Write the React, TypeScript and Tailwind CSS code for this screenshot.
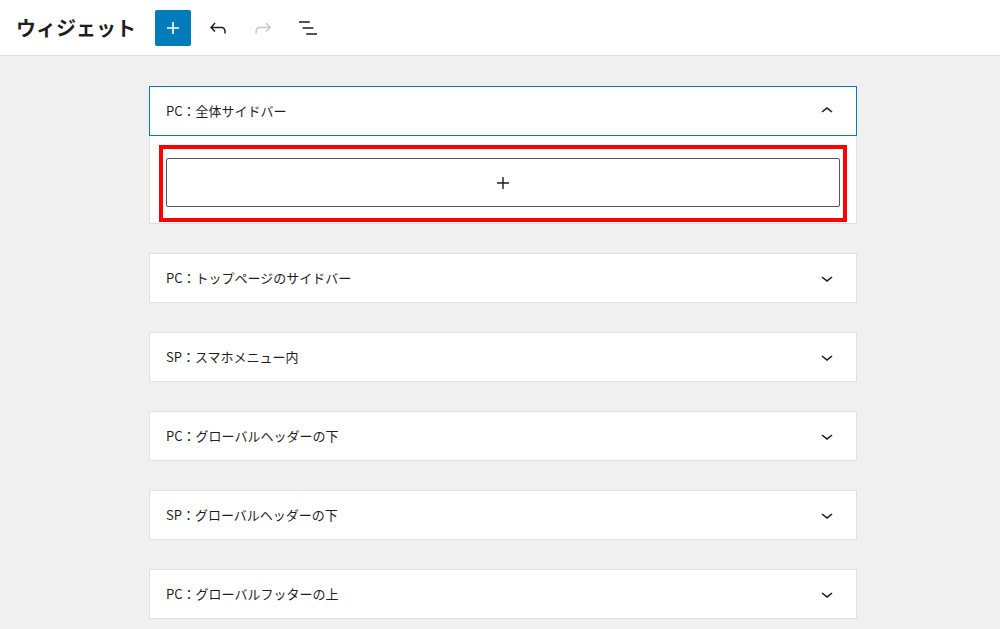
import React from "react";

const font = { fontFamily: '"Noto Sans CJK JP", "Noto Sans", sans-serif' };

function ChevronDown() {
  return (
    <svg width="24" height="24" viewBox="0 0 24 24" fill="currentColor">
      <path d="M17.5 11.6L12 16l-5.5-4.4.9-1.2L12 14l4.5-3.6 1 1.2z" />
    </svg>
  );
}
function ChevronUp() {
  return (
    <svg width="24" height="24" viewBox="0 0 24 24" fill="currentColor">
      <path d="M6.5 12.4L12 8l5.5 4.4-.9 1.2L12 10l-4.5 3.6-1-1.2z" />
    </svg>
  );
}

const items = [
  "PC：トップページのサイドバー",
  "SP：スマホメニュー内",
  "PC：グローバルヘッダーの下",
  "SP：グローバルヘッダーの下",
  "PC：グローバルフッターの上",
];

export default function App() {
  return (
    <div className="w-[1000px] h-[629px] bg-[#f0f0f0] overflow-hidden text-[#1e1e1e]" style={font}>
      <header className="h-[56px] bg-white border-b border-[#e0e0e0] flex items-center pl-[16px]">
        <h1 className="text-[20px] font-bold leading-none w-[139px] shrink-0 whitespace-nowrap">ウィジェット</h1>
        <button className="w-[36px] h-[36px] rounded-[2px] bg-[#007cba] flex items-center justify-center text-white">
          <svg width="24" height="24" viewBox="0 0 24 24" fill="currentColor">
            <path d="M18 11.2h-5.2V6h-1.6v5.2H6v1.6h5.2V18h1.6v-5.2H18z" />
          </svg>
        </button>
        <button className="w-[36px] h-[36px] ml-[9px] flex items-center justify-center text-[#1e1e1e]">
          <svg width="24" height="24" viewBox="0 0 24 24" fill="currentColor">
            <path d="M18.3 11.7c-.6-.6-1.4-.9-2.3-.9H6.7l2.9-3.3-1.1-1-4.5 5L8.5 16l1-1-2.7-2.7H16c.5 0 .9.2 1.3.5 1 1 1 3.4 1 4.5v.3h1.5v-.2c0-1.5 0-4.3-1.5-5.7z" />
          </svg>
        </button>
        <button className="w-[36px] h-[36px] ml-[9px] flex items-center justify-center text-[#c8c8c8]">
          <svg width="24" height="24" viewBox="0 0 24 24" fill="currentColor">
            <path d="M15.6 6.5l-1.1 1 2.9 3.3H8c-.9 0-1.7.3-2.3.9-1.4 1.5-1.4 4.2-1.4 5.6v.2h1.5v-.3c0-1.1 0-3.5 1-4.5.3-.3.7-.5 1.3-.5h9.2L14.5 15l1.1 1.1 4.6-4.6-4.6-5z" />
          </svg>
        </button>
        <button className="w-[36px] h-[36px] ml-[9px] flex items-center justify-center text-[#1e1e1e]">
          <svg width="24" height="24" viewBox="0 0 24 24" fill="currentColor">
            <path d="M13.8 5.2H3v1.5h10.8V5.2zm-3.6 12v1.5H21v-1.5H10.2zm7.2-6H6.6v1.5h10.8v-1.5z" />
          </svg>
        </button>
      </header>

      <main className="w-[708px] pt-[30px] flex flex-col gap-[29px] ml-[149px]">
        <section className="bg-white border border-[#e0e0e0]">
          <div className="h-[50px] border border-[#007cba] flex items-center justify-between pl-[16px] pr-[17px] -m-px mb-0 relative">
            <span className="text-[13px]">PC：全体サイドバー</span>
            <ChevronUp />
          </div>
          <div className="px-[9px] pt-[9px] pb-[1px]">
            <div className="border-[4px] border-[#ff0000] px-[3px] pt-[9px] pb-[11px]">
              <button className="w-full h-[49px] border border-[#555] rounded-[2px] flex items-center justify-center text-[#1e1e1e]">
                <svg width="24" height="24" viewBox="0 0 24 24" fill="currentColor">
                  <path d="M18 11.3h-5.3V6h-1.4v5.3H6v1.4h5.3V18h1.4v-5.3H18z" />
                </svg>
              </button>
            </div>
          </div>
        </section>
        {items.map((t) => (
          <section key={t} className="h-[50px] bg-white border border-[#e0e0e0] flex items-center justify-between pl-[16px] pr-[17px]">
            <span className="text-[13px]">{t}</span>
            <ChevronDown />
          </section>
        ))}
      </main>
    </div>
  );
}
